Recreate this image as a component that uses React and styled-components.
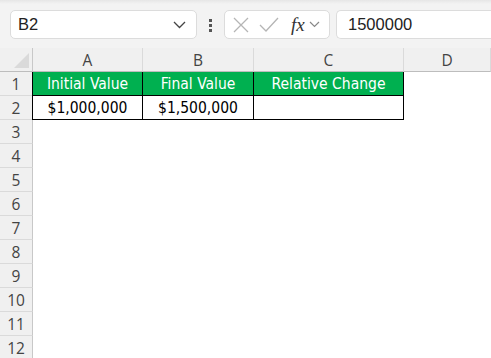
import React from "react";
import styled, { createGlobalStyle } from "styled-components";

const Global = createGlobalStyle`
  html, body { margin: 0; padding: 0; background: #fff; }
  body { font-family: "Liberation Sans", Arial, sans-serif; overflow: hidden; }
`;

const Page = styled.div`
  width: 491px;
  height: 358px;
  overflow: hidden;
  display: flex;
  flex-direction: column;
`;

const Toolbar = styled.div`
  height: 48px;
  flex-shrink: 0;
  box-sizing: border-box;
  padding: 10px 0 0 10px;
  display: flex;
  align-items: flex-start;
  background: #f3f3f3;
  background-image: linear-gradient(#e6e6e6, #f3f3f3 4px);
`;

const Box = styled.div`
  height: 29px;
  box-sizing: border-box;
  background: #fff;
  border: 1px solid #dcdcdc;
  border-radius: 5px;
  display: flex;
  align-items: center;
  font-size: 16.5px;
  color: #222;
`;

const NameBox = styled(Box)`
  width: 187px;
  padding: 0 10px 0 7px;
  justify-content: space-between;
`;

const Dots = styled.div`
  width: 27px;
  display: flex;
  flex-direction: column;
  align-items: center;
  gap: 2px;
  padding-top: 9px;
  span { width: 3px; height: 3px; background: #555; }
`;

const FxGroup = styled(Box)`
  width: 106px;
  padding: 0 6px 0 8px;
  gap: 10px;
  margin-right: 6px;
`;

const FormulaBox = styled(Box)`
  flex: 1;
  border-right: none;
  border-radius: 5px 0 0 5px;
  padding-left: 11px;
`;

const Fx = styled.span`
  font-family: "Liberation Serif", serif;
  font-style: italic;
  font-size: 19px;
  color: #333;
  margin-left: 2px;
`;

const Grid = styled.div`
  flex-shrink: 0;
  display: grid;
  grid-template-columns: 33px 110px 111px 150px 87px;
  grid-auto-rows: 24px;
`;

const Corner = styled.div`
  background: #f0f0f0;
  border-right: 1px solid #c8c8c8;
  border-bottom: 1px solid #bdbdbd;
  position: relative;
  &::before {
    content: "";
    position: absolute;
    right: 3px;
    bottom: 3px;
    width: 0;
    height: 0;
    border-left: 15px solid transparent;
    border-bottom: 15px solid #dadada;
  }
`;

const ColHead = styled.div`
  background: #f0f0f0;
  border-right: 1px solid #dadada;
  border-bottom: 1px solid #bdbdbd;
  display: flex;
  align-items: center;
  justify-content: center;
  padding-top: 1px;
  font-size: 15.5px;
  color: #444;
  font-family: "Open Sans", "Liberation Sans", sans-serif;
`;

const RowHead = styled.div`
  background: #f0f0f0;
  border-right: 1px solid #c8c8c8;
  border-bottom: 1px solid #dadada;
  display: flex;
  align-items: center;
  justify-content: center;
  font-size: 15.5px;
  color: #444;
  font-family: "Open Sans", "Liberation Sans", sans-serif;
`;

const Cell = styled.div`
  display: flex;
  align-items: center;
  justify-content: center;
  font-size: 15.5px;
  font-family: "Liberation Sans Narrow", "DejaVu Sans Condensed", "Liberation Sans", sans-serif;
  background: ${({ $head }) => ($head ? "#00b050" : "#fff")};
  color: ${({ $head }) => ($head ? "#fff" : "#000")};
  border-right: ${({ $table }) => ($table ? "1px solid #000" : "none")};
  border-bottom: ${({ $table }) => ($table ? "1px solid #000" : "none")};
  margin-left: ${({ $first }) => ($first ? "-1px" : "0")};
  border-left: ${({ $first }) => ($first ? "1px solid #000" : "none")};
`;

const Chevron = () => (
  <svg width="13" height="8" viewBox="0 0 13 8">
    <path d="M1 1l5.5 5.5L12 1" fill="none" stroke="#444" strokeWidth="1.3" />
  </svg>
);

const headers = ["Initial Value", "Final Value", "Relative Change"];
const values = ["$1,000,000", "$1,500,000", ""];

export default function App() {
  const rows = [];
  for (let r = 3; r <= 12; r++) {
    rows.push(
      <React.Fragment key={r}>
        <RowHead>{r}</RowHead>
        <Cell />
        <Cell />
        <Cell />
        <Cell />
      </React.Fragment>
    );
  }
  return (
    <Page>
      <Global />
      <Toolbar>
        <NameBox>
          <span>B2</span>
          <Chevron />
        </NameBox>
        <Dots>
          <span />
          <span />
          <span />
        </Dots>
        <FxGroup>
          <svg width="16" height="16" viewBox="0 0 16 16">
            <path d="M1 1l14 14M15 1L1 15" stroke="#b5b5b5" strokeWidth="1.3" />
          </svg>
          <svg width="20" height="15" viewBox="0 0 20 15">
            <path d="M1 8l6 6L19 1" fill="none" stroke="#b5b5b5" strokeWidth="1.3" />
          </svg>
          <Fx>fx</Fx>
          <svg width="11" height="7" viewBox="0 0 11 7" style={{ marginLeft: -6 }}>
            <path d="M1 1l4.5 4.5L10 1" fill="none" stroke="#888" strokeWidth="1.2" />
          </svg>
        </FxGroup>
        <FormulaBox>1500000</FormulaBox>
      </Toolbar>
      <Grid>
        <Corner />
        {["A", "B", "C", "D"].map((c) => (
          <ColHead key={c}>{c}</ColHead>
        ))}
        <RowHead>1</RowHead>
        {headers.map((h, i) => (
          <Cell key={h} $head $table $first={i === 0}>
            {h}
          </Cell>
        ))}
        <Cell />
        <RowHead>2</RowHead>
        {values.map((v, i) => (
          <Cell key={i} $table $first={i === 0}>
            {v}
          </Cell>
        ))}
        <Cell />
        {rows}
      </Grid>
    </Page>
  );
}
